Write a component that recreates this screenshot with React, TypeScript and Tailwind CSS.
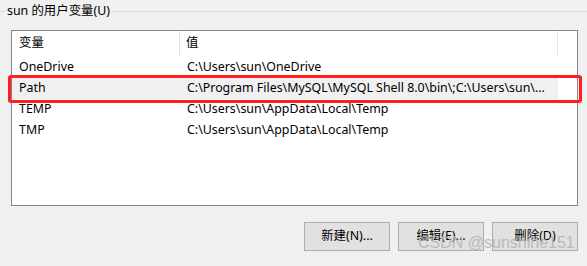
import React from "react";

const rows = [
  { name: "OneDrive", value: "C:\\Users\\sun\\OneDrive" },
  { name: "Path", value: "C:\\Program Files\\MySQL\\MySQL Shell 8.0\\bin\\;C:\\Users\\sun\\...", sel: true },
  { name: "TEMP", value: "C:\\Users\\sun\\AppData\\Local\\Temp" },
  { name: "TMP", value: "C:\\Users\\sun\\AppData\\Local\\Temp" },
];

export default function App() {
  return (
    <div
      className="relative w-[587px] h-[266px] overflow-hidden bg-[#f0f0f0] text-[12.4px] text-black"
      style={{ fontFamily: '"Noto Sans", "Noto Sans CJK SC", sans-serif' }}
    >
      <div className="flex items-center h-[23px]">
        <div className="w-[5px] h-px bg-[#dcdcdc]" />
        <span className="px-[2px] leading-none">sun 的用户变量(U)</span>
        <div className="flex-1 h-px bg-[#dcdcdc]" />
      </div>
      <div className="ml-[11px] mt-[7px] w-[567px] h-[176px] border border-[#828790] bg-white">
        <div className="flex h-[25px] items-center">
          <div className="w-[168px] h-full flex items-center pl-[7px] border-r border-[#e5e5e5]">变量</div>
          <div className="w-[378px] h-full flex items-center pl-[6px] border-r border-[#e5e5e5]">值</div>
        </div>
        <div className="pt-px">
          {rows.map((r) => (
            <div key={r.name} className={`flex h-[21px] items-center w-[546px] ${r.sel ? "bg-[#f0f0f0]" : ""}`}>
              <div className="w-[168px] pl-[7px]">{r.name}</div>
              <div className="pl-[7px] whitespace-nowrap">{r.value}</div>
            </div>
          ))}
        </div>
      </div>
      <div className="absolute left-[8px] top-[75px] w-[574px] h-[28px] border-[3px] border-[#ff1f1f] rounded-[3px]" />
      <div className="flex justify-end gap-[8px] mr-[9px] mt-[16px]">
        {["新建(N)...", "编辑(E)...", "删除(D)"].map((b) => (
          <div key={b} className="w-[86px] h-[29px] flex items-center justify-center border border-[#adadad] bg-[#e1e1e1]">
            {b}
          </div>
        ))}
      </div>
      <div
        className="absolute left-[418px] top-[235px] text-[16px] leading-none text-[#b4b4b4]"
        style={{ fontFamily: '"Liberation Sans", Arial, sans-serif', opacity: 0.85 }}
      >
        CSDN @sunshine151
      </div>
    </div>
  );
}
